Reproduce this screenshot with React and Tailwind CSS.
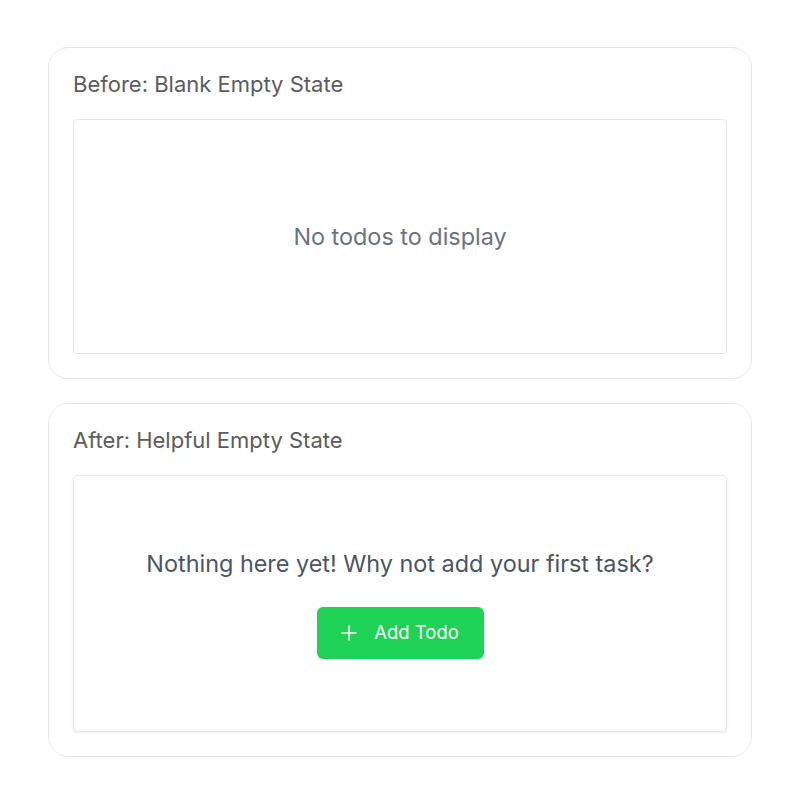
import React from 'react';

const Card = ({ title, children }) => (
    <div className="rounded-[20px] border border-[#e5e7eb] bg-white p-6">
        <h2 className="mb-[23px] text-[22px] leading-6 text-[#5c5c5c]">{title}</h2>
        {children}
    </div>
);

const App = () => {
    return (
        <div className="min-h-[805px] bg-white px-12 pt-[47px] font-['Inter',sans-serif]">
            <div className="flex flex-col gap-6">
                <Card title="Before: Blank Empty State">
                    <div className="flex h-[235px] items-center justify-center rounded border border-[#e5e7eb]">
                        <p className="text-[23.4px] text-[#6b7280]">No todos to display</p>
                    </div>
                </Card>
                <Card title="After: Helpful Empty State">
                    <div className="flex h-[257px] flex-col items-center justify-center rounded border border-[#e5e7eb] shadow-[0_1px_3px_rgba(0,0,0,0.08)]">
                        <p className="text-[23.4px] leading-8 text-[#4b5563]">
                            Nothing here yet! Why not add your first task?
                        </p>
                        <button className="mt-[27px] flex h-[52px] w-[167px] items-center justify-center gap-[17px] rounded-md bg-[#1ed256] text-[18.5px] text-white">
                            <svg width="16" height="16" viewBox="0 0 16 16" fill="none" stroke="currentColor" strokeWidth="1.6" strokeLinecap="round">
                                <path d="M8 1v14M1 8h14" />
                            </svg>
                            Add Todo
                        </button>
                    </div>
                </Card>
            </div>
        </div>
    );
};

export default App;
